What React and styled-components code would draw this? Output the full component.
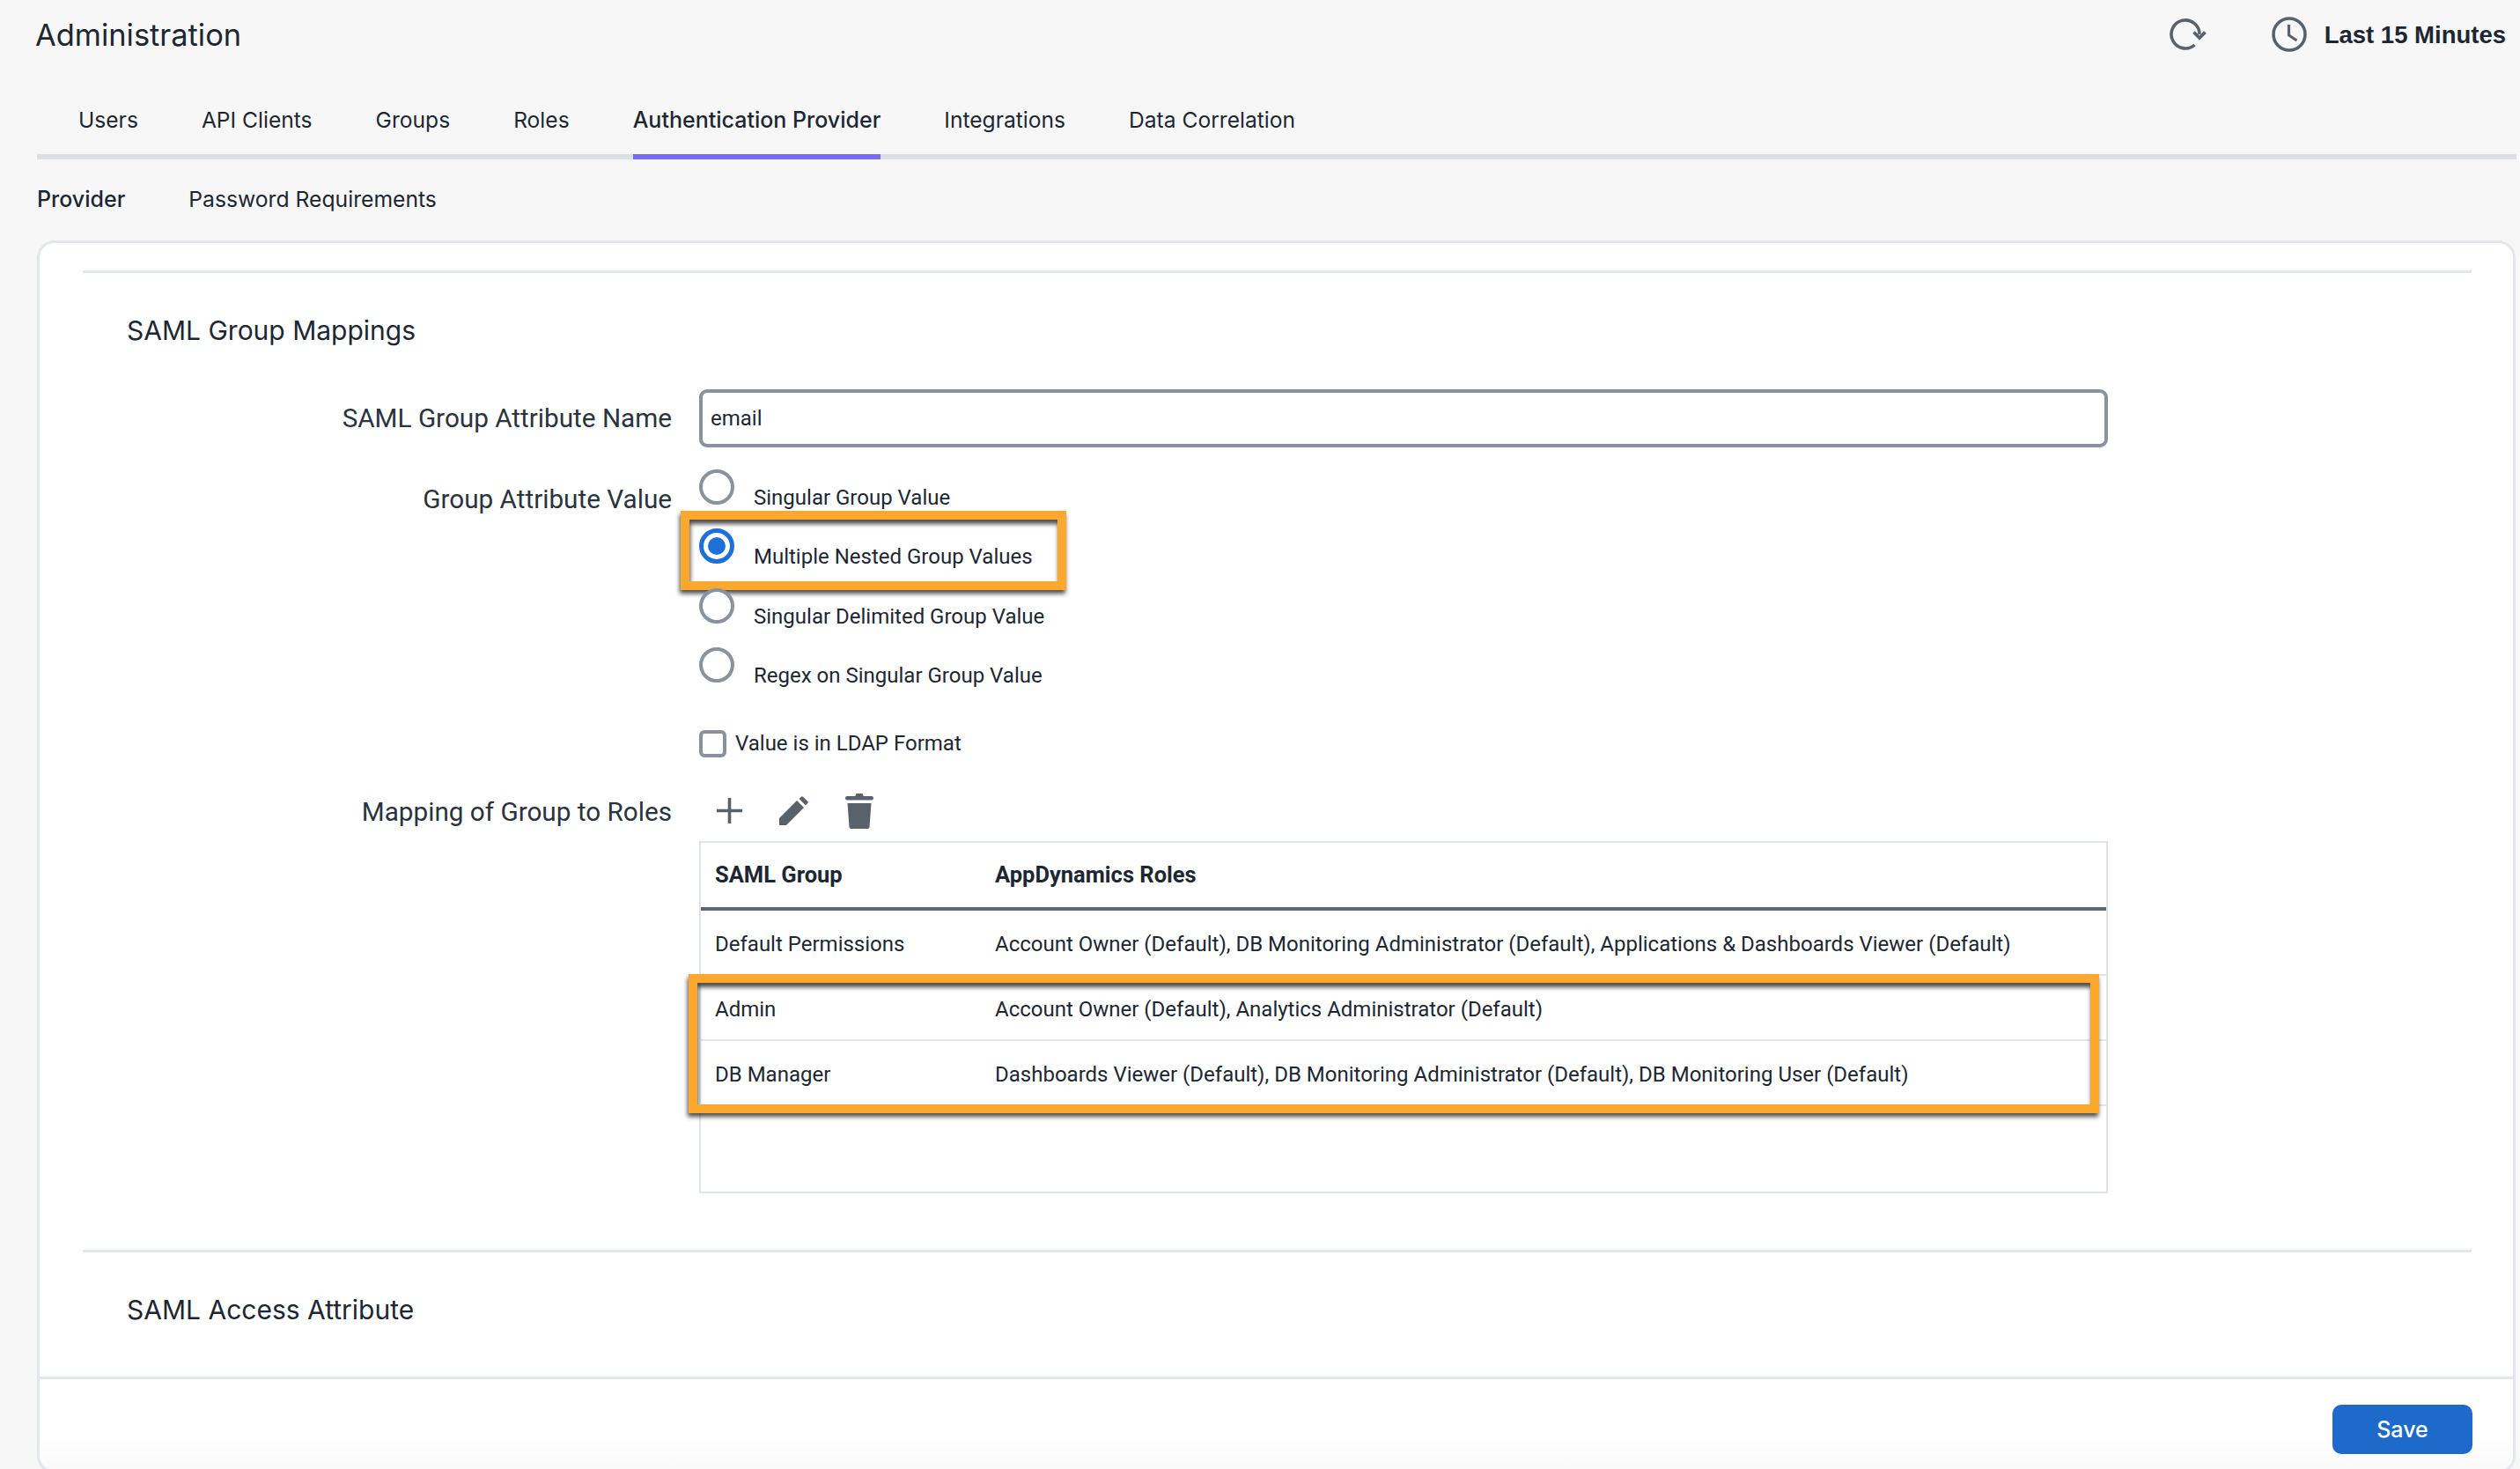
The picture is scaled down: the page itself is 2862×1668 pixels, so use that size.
import React from 'react';
import styled, { createGlobalStyle } from 'styled-components';

const tabs = [
  'Users',
  'API Clients',
  'Groups',
  'Roles',
  'Authentication Provider',
  'Integrations',
  'Data Correlation',
];

const radioOptions = [
  { label: 'Singular Group Value' },
  { label: 'Multiple Nested Group Values', checked: true },
  { label: 'Singular Delimited Group Value' },
  { label: 'Regex on Singular Group Value' },
];

const mappings = [
  {
    group: 'Default Permissions',
    roles:
      'Account Owner (Default), DB Monitoring Administrator (Default), Applications & Dashboards Viewer (Default)',
  },
  { group: 'Admin', roles: 'Account Owner (Default), Analytics Administrator (Default)' },
  {
    group: 'DB Manager',
    roles:
      'Dashboards Viewer (Default), DB Monitoring Administrator (Default), DB Monitoring User (Default)',
  },
];

function App() {
  return (
    <Page>
      <GlobalStyle />
      <TopBar>
        <Title>Administration</Title>
        <TopActions>
          {RefreshSVG}
          <TimeRange>
            {ClockSVG}
            <TimeLabel>Last 15 Minutes</TimeLabel>
          </TimeRange>
        </TopActions>
      </TopBar>

      <TabBar>
        {tabs.map((tab) => (
          <Tab key={tab} $active={tab === 'Authentication Provider'}>
            {tab}
          </Tab>
        ))}
      </TabBar>

      <SubTabs>
        <SubTab $active>Provider</SubTab>
        <SubTab>Password Requirements</SubTab>
      </SubTabs>

      <Card>
        <CardBody>
          <Section>
            <SectionTitle>SAML Group Mappings</SectionTitle>

            <FieldRow>
              <InputLabel>SAML Group Attribute Name</InputLabel>
              <TextInput>email</TextInput>
            </FieldRow>

            <FieldRow $top={25}>
              <GroupLabel>Group Attribute Value</GroupLabel>
              <div>
                {radioOptions.map((option) => (
                  <RadioRow key={option.label}>
                    <Radio $checked={option.checked} />
                    <RadioText>{option.label}</RadioText>
                    {option.checked && <RadioCallout />}
                  </RadioRow>
                ))}
                <CheckRow>
                  <Checkbox />
                  <CheckText>Value is in LDAP Format</CheckText>
                </CheckRow>
              </div>
            </FieldRow>

            <FieldRow $top={41}>
              <ToolbarLabel>Mapping of Group to Roles</ToolbarLabel>
              <div>
                <Toolbar>
                  {PlusSVG}
                  {PencilSVG}
                  {TrashSVG}
                </Toolbar>
                <MappingTable>
                  <HeaderRow>
                    <span>SAML Group</span>
                    <span>AppDynamics Roles</span>
                  </HeaderRow>
                  <TableRows>
                    {mappings.map((row) => (
                      <MappingRow key={row.group}>
                        <span>{row.group}</span>
                        <span>{row.roles}</span>
                      </MappingRow>
                    ))}
                    <RowsCallout />
                  </TableRows>
                </MappingTable>
              </div>
            </FieldRow>
          </Section>

          <Section $next>
            <SectionTitle>SAML Access Attribute</SectionTitle>
          </Section>
        </CardBody>

        <CardFooter>
          <SaveButton>Save</SaveButton>
        </CardFooter>
      </Card>
    </Page>
  );
}

export default App;

const ICON_COLOR = '#59626b';

const RefreshSVG = (
  <svg width='42' height='36' viewBox='0 0 42 36' fill='none' stroke={ICON_COLOR} strokeWidth='3.6'>
    <path d='M28.5 30A16 16 0 1 1 34 18' />
    <path d='M27.5 15.5 34 22l6.5-6.5' strokeWidth='3.8' />
  </svg>
);

const ClockSVG = (
  <svg width='40' height='40' viewBox='0 0 40 40' fill='none' stroke={ICON_COLOR} strokeWidth='3.6'>
    <circle cx='20' cy='20' r='18' />
    <path d='M19.5 9v12l9 6' strokeWidth='3.2' />
  </svg>
);

const PlusSVG = (
  <svg width='29' height='29' viewBox='0 0 29 29' fill='none' stroke={ICON_COLOR} strokeWidth='3.6'>
    <path d='M14.5 0v29M0 14.5h29' />
  </svg>
);

const PencilSVG = (
  <svg width='33' height='33' viewBox='0 0 33 33' fill={ICON_COLOR}>
    <path d='M0 33v-8L20 5l8 8L8 33z' />
    <path d='M22.5 3 25 .7q1-.9 2 0l5.3 5.3q.9 1 0 2L30 10.500z' />
  </svg>
);

const TrashSVG = (
  <svg width='32' height='40' viewBox='0 0 32 40' fill={ICON_COLOR}>
    <path d='M11 3.500 12.500 0h7L21 3.500z' />
    <rect y='3' width='32' height='4.500' rx='2.250' />
    <path d='M2.500 11h27l-2 27q-.2 2-2 2h-19q-1.800 0-2-2z' />
  </svg>
);

const GlobalStyle = createGlobalStyle`
  html,
  body {
    margin: 0;
    background: #f7f7f7;
  }
  * {
    box-sizing: border-box;
  }
`;

const Page = styled.div`
  width: 2862px;
  height: 1668px;
  overflow: hidden;
  background: #f7f7f7;
  font-family: Inter, 'Liberation Sans', sans-serif;
  color: #1d2733;
`;

const TopBar = styled.header`
  height: 78px;
  padding: 0 16px 0 40px;
  display: flex;
  align-items: center;
  justify-content: space-between;
`;

const Title = styled.h1`
  margin: 0;
  font-size: 34.4px;
  font-weight: 400;
`;

const TopActions = styled.div`
  display: flex;
  align-items: center;
  gap: 74px;
`;

const TimeRange = styled.div`
  display: flex;
  align-items: center;
  gap: 20px;
`;

const TimeLabel = styled.span`
  padding-top: 1px;
  font-family: 'Liberation Sans', sans-serif;
  font-size: 27.5px;
  font-weight: 700;
`;

const TabBar = styled.nav`
  margin: 0 4px 0 42px;
  padding-left: 47px;
  height: 103px;
  display: flex;
  gap: 72px;
  border-bottom: 6px solid #dcdfe3;
`;

const Tab = styled.div`
  height: 103px;
  padding-top: 43px;
  font-size: ${(props) => (props.$active ? '25px' : '24.6px')};
  line-height: 30px;
  font-weight: ${(props) => (props.$active ? 500 : 400)};
  border-bottom: 6px solid ${(props) => (props.$active ? '#7a68fb' : 'transparent')};
`;

const SubTabs = styled.div`
  height: 92px;
  padding: 30px 0 0 42px;
  display: flex;
  gap: 72px;
`;

const SubTab = styled.div`
  font-size: ${(props) => (props.$active ? '25px' : '24.7px')};
  line-height: 30px;
  font-weight: ${(props) => (props.$active ? 500 : 400)};
`;

const Card = styled.main`
  margin: 0 5px 0 42px;
  height: 1400px;
  display: flex;
  flex-direction: column;
  background: #fff;
  border: 3px solid #e3e6ea;
  border-radius: 20px;
`;

const CardBody = styled.div`
  height: 1287px;
  padding: 31px 47px 0 49px;
`;

const Section = styled.section`
  border-top: 3px solid #e3e6ea;
  margin-top: ${(props) => (props.$next ? '64px' : '0')};
  padding-top: 45px;
`;

const SectionTitle = styled.h2`
  margin: 0 0 47px 50px;
  font-size: 30px;
  line-height: 40px;
  font-weight: 400;
`;

const FieldRow = styled.div`
  display: grid;
  grid-template-columns: 669px 1600px;
  column-gap: 31px;
  margin-top: ${(props) => props.$top || 0}px;
`;

const Label = styled.label`
  font-family: Roboto, 'Liberation Sans', sans-serif;
  font-size: 29.7px;
  line-height: 36px;
  text-align: right;
  color: #2a333e;
`;

const InputLabel = styled(Label)`
  align-self: center;
`;

const GroupLabel = styled(Label)`
  padding-top: 16px;
`;

const ToolbarLabel = styled(Label)`
  padding-top: 3px;
`;

const TextInput = styled.div`
  height: 66px;
  padding-left: 9px;
  display: flex;
  align-items: center;
  font-family: Roboto, 'Liberation Sans', sans-serif;
  font-size: 24px;
  background: #fff;
  border: 4px solid #8a939d;
  border-radius: 9px;
`;

const RadioRow = styled.div`
  position: relative;
  height: 67.4px;
  display: flex;
  gap: 22px;
`;

const Radio = styled.span`
  width: 40px;
  height: 40px;
  border-radius: 50%;
  background: #fff;
  border: ${(props) => (props.$checked ? '5px solid #1f6fd8' : '4px solid #8a939d')};
  display: flex;
  align-items: center;
  justify-content: center;
  &::after {
    content: '';
    display: ${(props) => (props.$checked ? 'block' : 'none')};
    width: 20px;
    height: 20px;
    border-radius: 50%;
    background: #1f6fd8;
  }
`;

const RadioText = styled.span`
  margin-top: 17px;
  font-family: Roboto, 'Liberation Sans', sans-serif;
  font-size: 24px;
  line-height: 30px;
`;

const Callout = styled.div`
  position: absolute;
  border: 10px solid #faa82e;
  box-shadow:
    -1px 4px 5px rgba(30, 30, 30, 0.8),
    inset 1px 5px 5px rgba(30, 30, 30, 0.8);
  pointer-events: none;
`;

const RadioCallout = styled(Callout)`
  top: -20px;
  left: -21px;
  width: 438px;
  height: 90px;
`;

const CheckRow = styled.div`
  margin-top: 26px;
  display: flex;
  align-items: center;
  gap: 10px;
`;

const Checkbox = styled.span`
  width: 31px;
  height: 31px;
  border: 4px solid #8a939d;
  border-radius: 6px;
  background: #fff;
`;

const CheckText = styled.span`
  font-family: Roboto, 'Liberation Sans', sans-serif;
  font-size: 24px;
  line-height: 30px;
`;

const Toolbar = styled.div`
  height: 40px;
  margin-bottom: 14px;
  padding-left: 20px;
  display: flex;
  align-items: center;
  gap: 42px;
`;

const MappingTable = styled.div`
  height: 400px;
  border: 2px solid #e0e3e7;
  font-family: Roboto, 'Liberation Sans', sans-serif;
  font-size: 24px;
`;

const HeaderRow = styled.div`
  height: 77px;
  padding-left: 16px;
  display: grid;
  grid-template-columns: 318px 1fr;
  align-items: center;
  font-size: 25.5px;
  font-weight: 700;
  border-bottom: 4px solid #5f6771;
`;

const TableRows = styled.div`
  position: relative;
`;

const MappingRow = styled.div`
  height: 74px;
  padding: 5px 0 0 16px;
  display: grid;
  grid-template-columns: 318px 1fr;
  align-items: center;
  border-bottom: 2px solid #e3e6ea;
`;

const RowsCallout = styled(Callout)`
  top: 72px;
  left: -14px;
  width: 1602px;
  height: 158px;
`;

const CardFooter = styled.footer`
  flex: 1;
  padding: 29px 46px 0 0;
  display: flex;
  justify-content: flex-end;
  align-items: flex-start;
  border-top: 3px solid #e3e6ea;
  border-radius: 0 0 18px 18px;
  background: linear-gradient(#fff 60%, #f9f9f9);
`;

const SaveButton = styled.button`
  width: 159px;
  height: 56px;
  border: none;
  border-radius: 10px;
  background: #1e6acb;
  color: #fff;
  font-family: inherit;
  font-size: 25px;
  font-weight: 500;
`;
